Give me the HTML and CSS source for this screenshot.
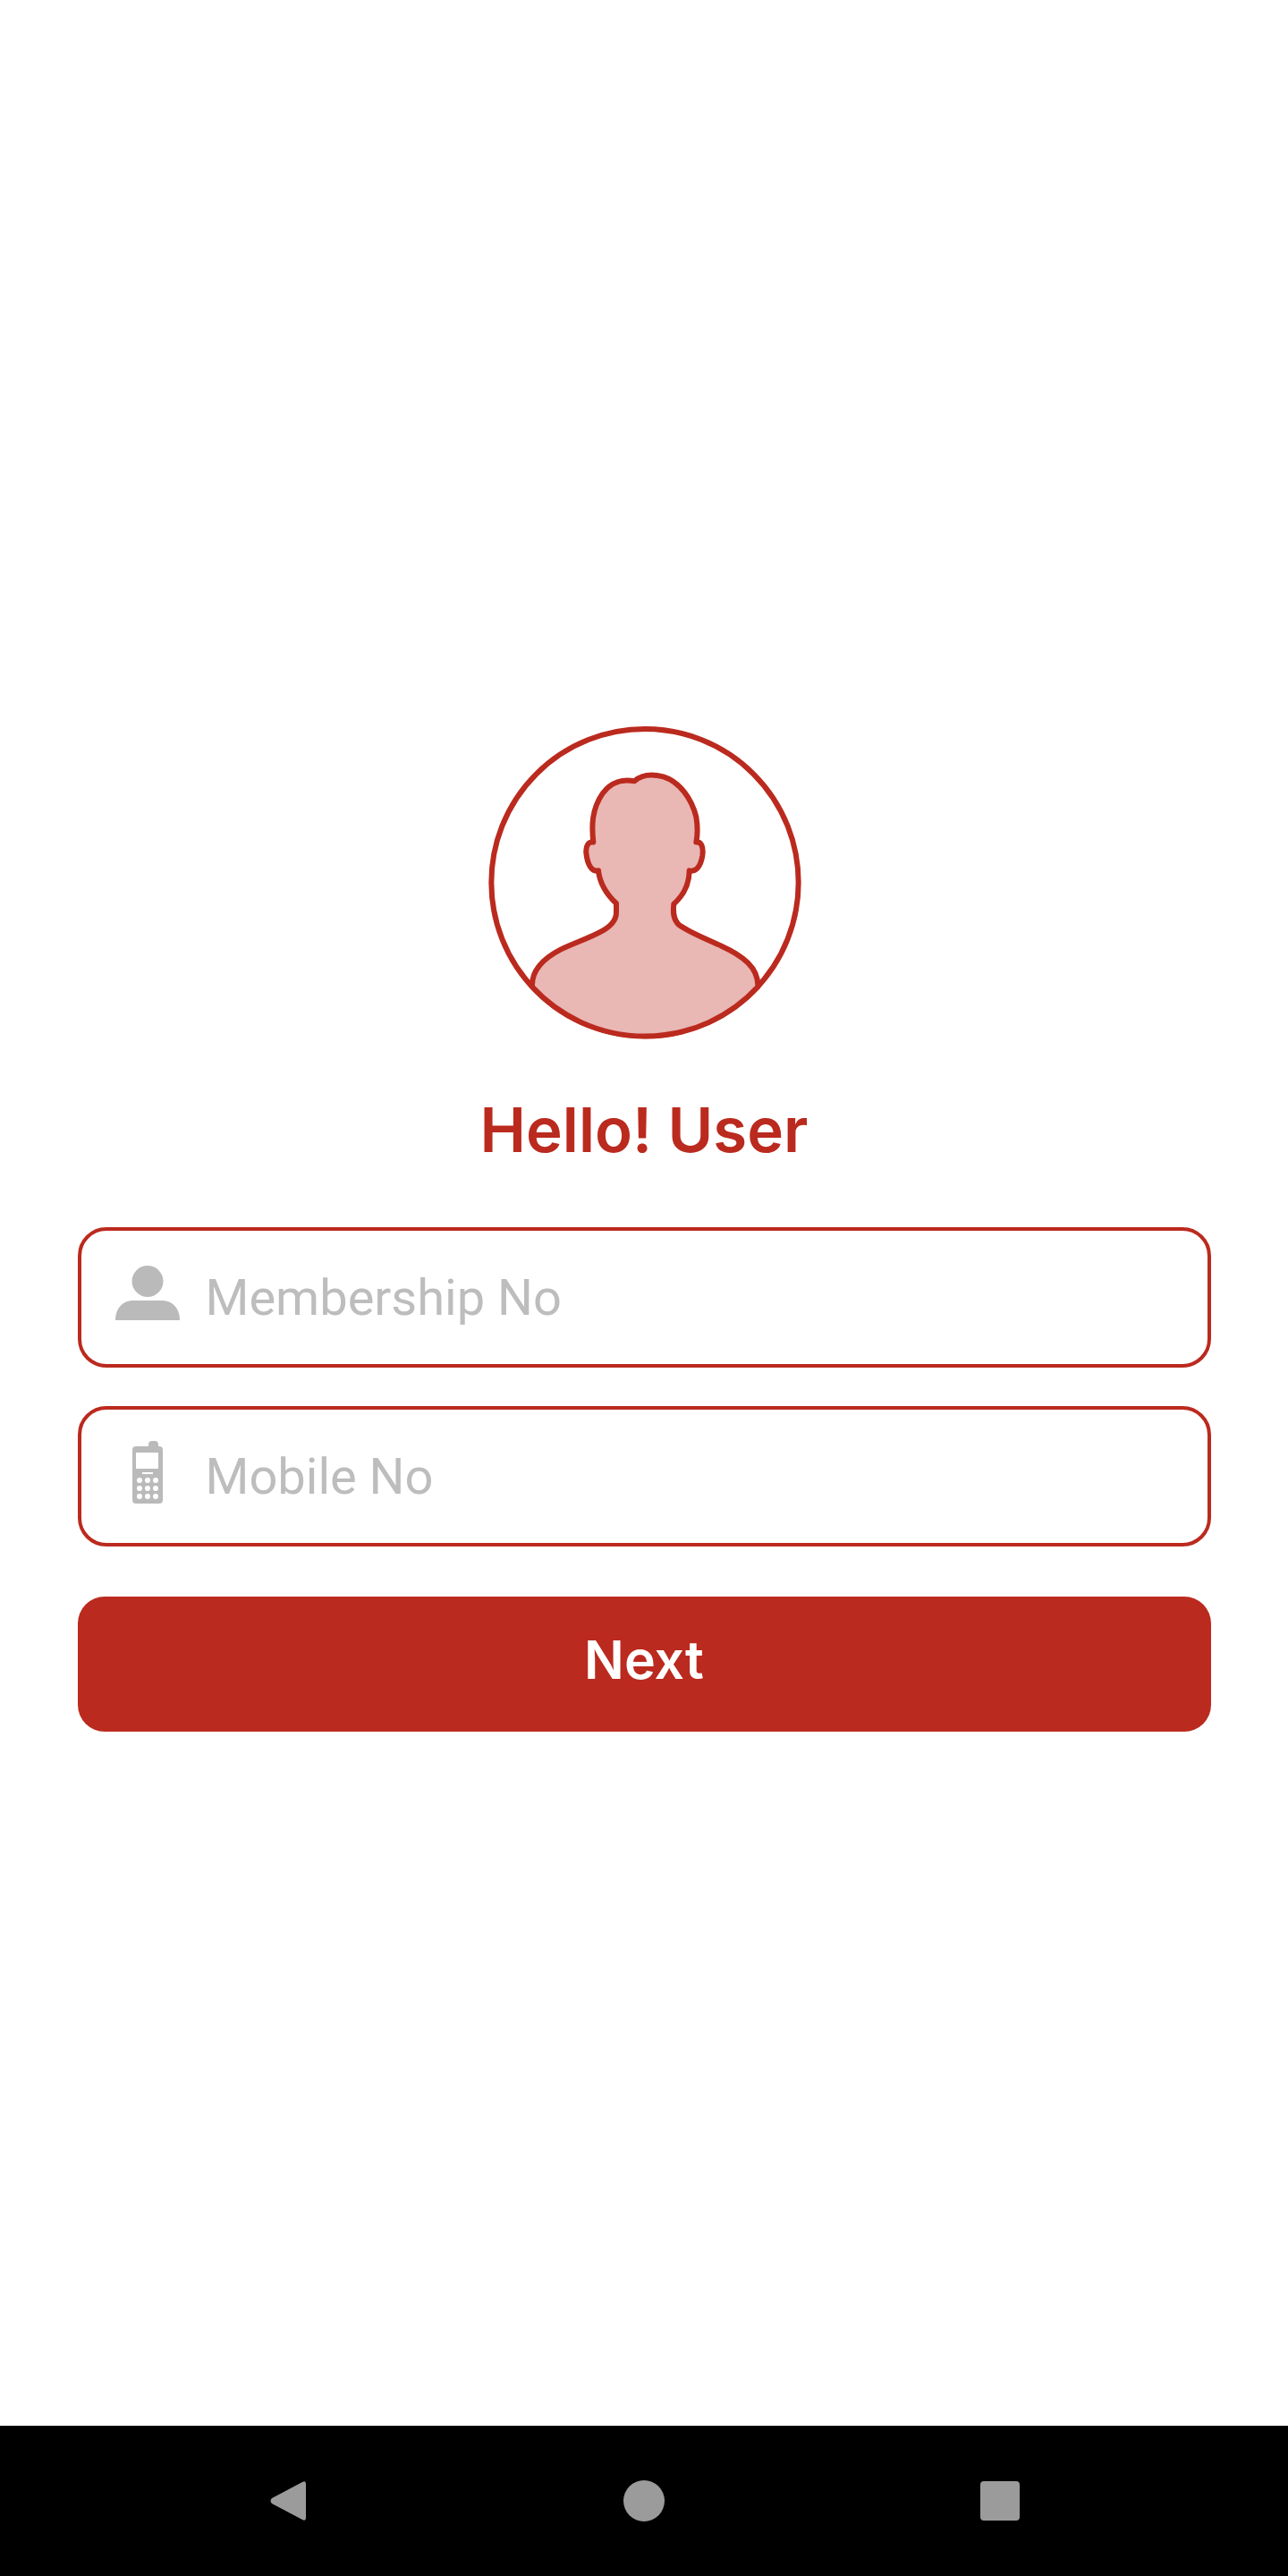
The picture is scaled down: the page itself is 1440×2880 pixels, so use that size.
FILE: index.html
```html
<!DOCTYPE html>
<html lang="en">
<head>
  <meta charset="UTF-8">
  <meta name="viewport" content="width=device-width, initial-scale=1.0">
  <title>Hello User</title>
  <link rel="stylesheet" href="styles.css">
</head>
<body>
  <main class="login">
    <!-- avatar -->
    <svg class="avatar" viewBox="0 0 1200 1200" aria-hidden="true">
      <circle cx="603" cy="590" r="515" fill="#fff" stroke="#bb2a1e" stroke-width="18"/>
      <path d="M225 940 C222 885 262 845 320 815 C365 793 420 775 455 755 C490 737 507 715 507 690 L507 660 C475 630 452 595 447 550 C425 556 410 530 406 490 C404 465 415 452 430 455 C424 400 424 345 462 290 C490 252 530 242 568 250 C590 230 625 225 665 235 C720 252 760 310 775 370 C780 400 780 430 775 455 C792 452 800 470 796 500 C790 535 775 556 752 550 C752 600 730 635 700 662 C697 690 698 712 715 730 C745 755 810 780 860 803 C930 835 985 875 982 940 A515 515 0 0 1 225 940 Z" fill="#e9b7b4" stroke="#bb2a1e" stroke-width="18" stroke-linejoin="round"/>
    </svg>

    <h1 class="title">Hello! User</h1>

    <form class="form">
      <div class="field">
        <span class="field-icon">
          <svg width="72" height="62" viewBox="0 0 72 62" aria-hidden="true">
            <ellipse cx="36" cy="17.5" rx="17.5" ry="17.5" fill="#bababa"/>
            <path d="M0 61 C0 48 8 39 20 39 L52 39 C64 39 72 48 72 61 Z" fill="#bababa"/>
          </svg>
        </span>
        <span class="placeholder">Membership No</span>
      </div>

      <div class="field">
        <span class="field-icon">
          <svg width="34" height="70" viewBox="0 0 34 70" aria-hidden="true">
            <rect x="18" y="0" width="11" height="10" rx="4" fill="#bababa"/>
            <rect x="0" y="6" width="34" height="64" rx="4" fill="#bababa"/>
            <rect x="4" y="13" width="25" height="18" fill="#fff"/>
            <rect x="11" y="35" width="12" height="2" fill="#fff"/>
            <g fill="#fff">
              <circle cx="8" cy="44" r="3"/><circle cx="17" cy="44" r="3"/><circle cx="26" cy="44" r="3"/>
              <circle cx="8" cy="53" r="3"/><circle cx="17" cy="53" r="3"/><circle cx="26" cy="53" r="3"/>
              <circle cx="8" cy="62" r="3"/><circle cx="17" cy="62" r="3"/><circle cx="26" cy="62" r="3"/>
            </g>
          </svg>
        </span>
        <span class="placeholder">Mobile No</span>
      </div>

      <button class="next-button" type="button">Next</button>
    </form>
  </main>

  <!-- android nav bar -->
  <nav class="navbar">
    <span class="nav-item">
      <svg width="40" height="46" viewBox="0 0 40 46" aria-hidden="true">
        <path d="M36 2 L2 20 Q-1 23 2 26 L36 44 Q40 46 40 42 L40 4 Q40 0 36 2 Z" fill="#9b9b9b"/>
      </svg>
    </span>
    <span class="nav-item"><span class="nav-circle"></span></span>
    <span class="nav-item"><span class="nav-square"></span></span>
  </nav>
</body>
</html>
```

FILE: styles.css
```css
/* General Styles */
body {
  margin: 0;
  background-color: #fff;
  font-family: 'Roboto', sans-serif;
}

.login {
  height: 2712px;
  box-sizing: border-box;
  padding-top: 790px;
  display: flex;
  flex-direction: column;
  align-items: center;
}

.avatar {
  display: block;
  width: 400px;
  height: 400px;
}

.title {
  margin: 28px 0 0;
  font-family: 'Inter', sans-serif;
  font-size: 69px;
  line-height: 90px;
  font-weight: 600;
  color: #bb2a1e;
}

/* Form */
.form {
  width: 1267px;
  margin-top: 64px;
}

.field {
  height: 157px;
  box-sizing: border-box;
  display: flex;
  align-items: center;
  padding-left: 38px;
  margin-bottom: 43px;
  border: 4px solid #bb2a1e;
  border-radius: 32px;
}

.field-icon {
  width: 72px;
  flex: none;
  display: flex;
  justify-content: center;
  padding-bottom: 10px;
}

.placeholder {
  margin-left: 29px;
  font-size: 56px;
  color: #bdbdbd;
}

.next-button {
  display: block;
  width: 100%;
  height: 151px;
  margin-top: 56px;
  padding: 0 0 10px;
  border: none;
  border-radius: 30px;
  background-color: #bb2a1e;
  color: #fff;
  font-family: 'Inter', sans-serif;
  font-size: 59px;
  font-weight: 600;
}

/* Nav bar */
.navbar {
  height: 168px;
  background-color: #000;
  display: flex;
  justify-content: center;
  align-items: center;
}

.nav-item {
  width: 398px;
  display: flex;
  justify-content: center;
}

.nav-circle {
  width: 46px;
  height: 46px;
  border-radius: 50%;
  background-color: #9b9b9b;
}

.nav-square {
  width: 44px;
  height: 44px;
  border-radius: 4px;
  background-color: #9b9b9b;
}
```
